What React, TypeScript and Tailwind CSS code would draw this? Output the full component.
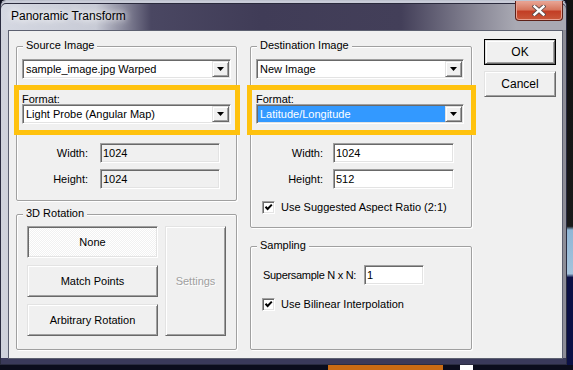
import React from 'react'

const sunken =
  'border border-t-[#a0a0a0] border-l-[#a0a0a0] border-b-white border-r-white shadow-[inset_1px_1px_0_#696969,inset_-1px_-1px_0_#e3e3e3]'
const raised =
  'border border-t-[#e3e3e3] border-l-[#e3e3e3] border-b-[#696969] border-r-[#696969] shadow-[inset_1px_1px_0_#ffffff,inset_-1px_-1px_0_#a0a0a0]'

const Arrow = () => (
  <svg width="7" height="4" viewBox="0 0 7 4">
    <polygon points="0,0 7,0 3.5,4" fill="#000" />
  </svg>
)

const Combo = ({ text, width, selected }: { text: string; width: string; selected?: boolean }) => (
  <div className={`flex h-[20px] ${width} ${sunken} bg-white p-[1px]`}>
    <div className="flex flex-1 items-center">
      <span
        className={`flex h-full flex-1 items-center pl-[2px] ${selected ? 'bg-[#3399ff] text-white' : ''}`}
      >
        {text}
      </span>
    </div>
    <div className={`flex w-[17px] items-center justify-center bg-[#f0f0f0] ${raised}`}>
      <Arrow />
    </div>
  </div>
)

const Field = ({ value, width, disabled }: { value: string; width: string; disabled?: boolean }) => (
  <div
    className={`flex h-[20px] items-center pl-[2px] ${width} ${sunken} ${disabled ? 'bg-[#f0f0f0]' : 'bg-white'}`}
  >
    {value}
  </div>
)

const Check = ({ label }: { label: string }) => (
  <div className="ml-[11px] flex items-center">
    <div className={`flex h-[13px] w-[13px] items-center justify-center bg-white ${sunken}`}>
      <svg width="9" height="9" viewBox="0 0 9 9">
        <path d="M1.5 3.8 L3.6 6 L7.8 1.6" stroke="#000" strokeWidth="2" fill="none" />
      </svg>
    </div>
    <span className="ml-[6px]">{label}</span>
  </div>
)

const Group = ({ title, height, children }: { title: string; height: string; children: React.ReactNode }) => (
  <div
    className={`relative ${height} rounded-[2px] border border-[#a0a0a0] shadow-[inset_1px_1px_0_#ffffff,1px_1px_0_#ffffff]`}
  >
    <span className="absolute -top-[8px] left-[6px] bg-[#f0f0f0] px-[3px] leading-[13px]">{title}</span>
    <div className="flex flex-col">{children}</div>
  </div>
)

const Row = ({ label, labelWidth, gap, children }: { label: string; labelWidth: string; gap: string; children: React.ReactNode }) => (
  <div className="flex items-center">
    <span className={`${labelWidth} text-right`}>{label}</span>
    <div className={gap}>{children}</div>
  </div>
)

const Button = ({ children, className }: { children: React.ReactNode; className: string }) => (
  <div className={`flex items-center justify-center bg-[#f0f0f0] ${raised} ${className}`}>{children}</div>
)

export default function App() {
  return (
    <div className="h-[370px] w-[573px] overflow-hidden bg-[#0b0d1c] font-['Liberation_Sans',Arial,sans-serif] text-[11px] leading-[13px] text-black">
      <div className="flex">
        {/* window */}
        <div className="flex h-[365px] w-[567px] flex-col rounded-t-[6px] border border-[#2a2c40] border-t-[#bfc3cf] bg-[linear-gradient(0deg,#3a3a5a_6px,transparent_6px),linear-gradient(90deg,#d0d3dc,#b6b9c4_30%,#8d8d97_100%)]">
          {/* title bar */}
          <div className="flex h-[29px] items-start justify-between rounded-t-[5px] bg-[linear-gradient(90deg,#d5d8e2_0px,#c8cbd6_95px,#4a4762_150px,#403c57_260px,#433f59_400px,#8c8b99_480px,#a9a9b3_515px)] shadow-[inset_0_2px_0_#c9ccd8,inset_0_3px_0_#2a2a3c]">
            <span className="pl-[10px] pt-[8px] text-[12px] leading-[14px] [text-shadow:0_0_6px_#fff,0_0_10px_#fff]">
              Panoramic Transform
            </span>
            <div className="mr-[3px] flex h-[20px] w-[48px] items-center justify-center rounded-b-[4px] border border-t-0 border-[#5d2119] bg-[linear-gradient(180deg,#e9a797_0%,#d7775f_45%,#c33e25_55%,#c9583a_100%)] shadow-[inset_0_0_0_1px_#e8a090]">
              <svg width="14" height="11" viewBox="0 0 14 11">
                <path d="M2.5 1.5 L11.5 9.5 M11.5 1.5 L2.5 9.5" stroke="#5a4a4a" strokeWidth="4.2" strokeLinecap="square" />
                <path d="M2.5 1.5 L11.5 9.5 M11.5 1.5 L2.5 9.5" stroke="#ffffff" strokeWidth="2.4" strokeLinecap="square" />
              </svg>
            </div>
          </div>

          {/* client area */}
          <div className="ml-[7px] flex h-[329px] w-[555px] border border-[#5c6070] bg-[#f0f0f0] pl-[7px] pt-[8px]">
            {/* left column */}
            <div className="mt-[7px] flex w-[221px] flex-col">
              <Group title="Source Image" height="h-[155px]">
                <div className="ml-[5px] mt-[12px]">
                  <Combo text="sample_image.jpg Warped" width="w-[209px]" />
                </div>
                <div className="-ml-[3px] mt-[6px] flex h-[50px] w-[226px] flex-col border-[5px] border-[#ffc20e]">
                  <span className="ml-[3px] mt-[4px] leading-[10px]">Format:</span>
                  <div className="ml-[3px]">
                    <Combo text="Light Probe (Angular Map)" width="w-[209px]" />
                  </div>
                </div>
                <div className="mt-[8px]">
                  <Row label="Width:" labelWidth="w-[71px]" gap="ml-[12px]">
                    <Field value="1024" width="w-[120px]" disabled />
                  </Row>
                </div>
                <div className="mt-[6px]">
                  <Row label="Height:" labelWidth="w-[71px]" gap="ml-[12px]">
                    <Field value="1024" width="w-[120px]" disabled />
                  </Row>
                </div>
              </Group>

              <div className="mt-[13px]">
                <Group title="3D Rotation" height="h-[136px]">
                  <div className="flex gap-[7px] pl-[10px] pt-[11px]">
                    <div className="flex w-[131px] flex-col gap-[7px]">
                      <div
                        className={`flex h-[32px] items-center justify-center bg-[repeating-conic-gradient(#ffffff_0%_25%,#f1f1f1_0%_50%)] bg-[length:2px_2px] ${sunken}`}
                      >
                        None
                      </div>
                      <Button className="h-[32px]">Match Points</Button>
                      <Button className="h-[32px]">Arbitrary Rotation</Button>
                    </div>
                    <Button className="h-[110px] w-[61px] text-[#a0a0a0] [text-shadow:1px_1px_0_#fff]">Settings</Button>
                  </div>
                </Group>
              </div>
            </div>

            {/* right column */}
            <div className="ml-[13px] mt-[7px] flex w-[222px] flex-col">
              <Group title="Destination Image" height="h-[182px]">
                <div className="ml-[5px] mt-[12px]">
                  <Combo text="New Image" width="w-[208px]" />
                </div>
                <div className="-ml-[4px] mt-[6px] flex h-[50px] w-[229px] flex-col border-[5px] border-[#ffc20e]">
                  <span className="ml-[4px] mt-[4px] leading-[10px]">Format:</span>
                  <div className="ml-[4px]">
                    <Combo text="Latitude/Longitude" width="w-[208px]" selected />
                  </div>
                </div>
                <div className="mt-[8px]">
                  <Row label="Width:" labelWidth="w-[72px]" gap="ml-[10px]">
                    <Field value="1024" width="w-[121px]" />
                  </Row>
                </div>
                <div className="mt-[6px]">
                  <Row label="Height:" labelWidth="w-[72px]" gap="ml-[10px]">
                    <Field value="512" width="w-[121px]" />
                  </Row>
                </div>
                <div className="mt-[12px]">
                  <Check label="Use Suggested Aspect Ratio (2:1)" />
                </div>
              </Group>

              <div className="mt-[18px]">
                <Group title="Sampling" height="h-[104px]">
                  <div className="mt-[18px] flex items-center">
                    <span className="ml-[12px] w-[101px] tracking-[-0.3px]">Supersample N x N:</span>
                    <Field value="1" width="w-[60px]" />
                  </div>
                  <div className="mt-[13px]">
                    <Check label="Use Bilinear Interpolation" />
                  </div>
                </Group>
              </div>
            </div>

            {/* buttons */}
            <div className="ml-[12px] flex w-[72px] flex-col">
              <div className="h-[26px] border border-black">
                <Button className="h-full text-[12px]">OK</Button>
              </div>
              <Button className="mt-[6px] h-[26px] text-[12px]">Cancel</Button>
            </div>
          </div>
        </div>

        {/* desktop strip on the right */}
        <div className="h-[365px] flex-1 bg-[linear-gradient(180deg,#111111_0%,#1a1a1a_62%,#8fb6d6_63%,#a4c3dc_75%,#0b1045_76%,#0b1045_100%)]" />
      </div>
      {/* desktop strip at the bottom */}
      <div className="flex h-[5px]">
        <div className="w-[328px]" />
        <div className="w-[115px] bg-[#c86b14]" />
        <div className="w-[17px]" />
        <div className="w-[13px] bg-white" />
      </div>
    </div>
  )
}
